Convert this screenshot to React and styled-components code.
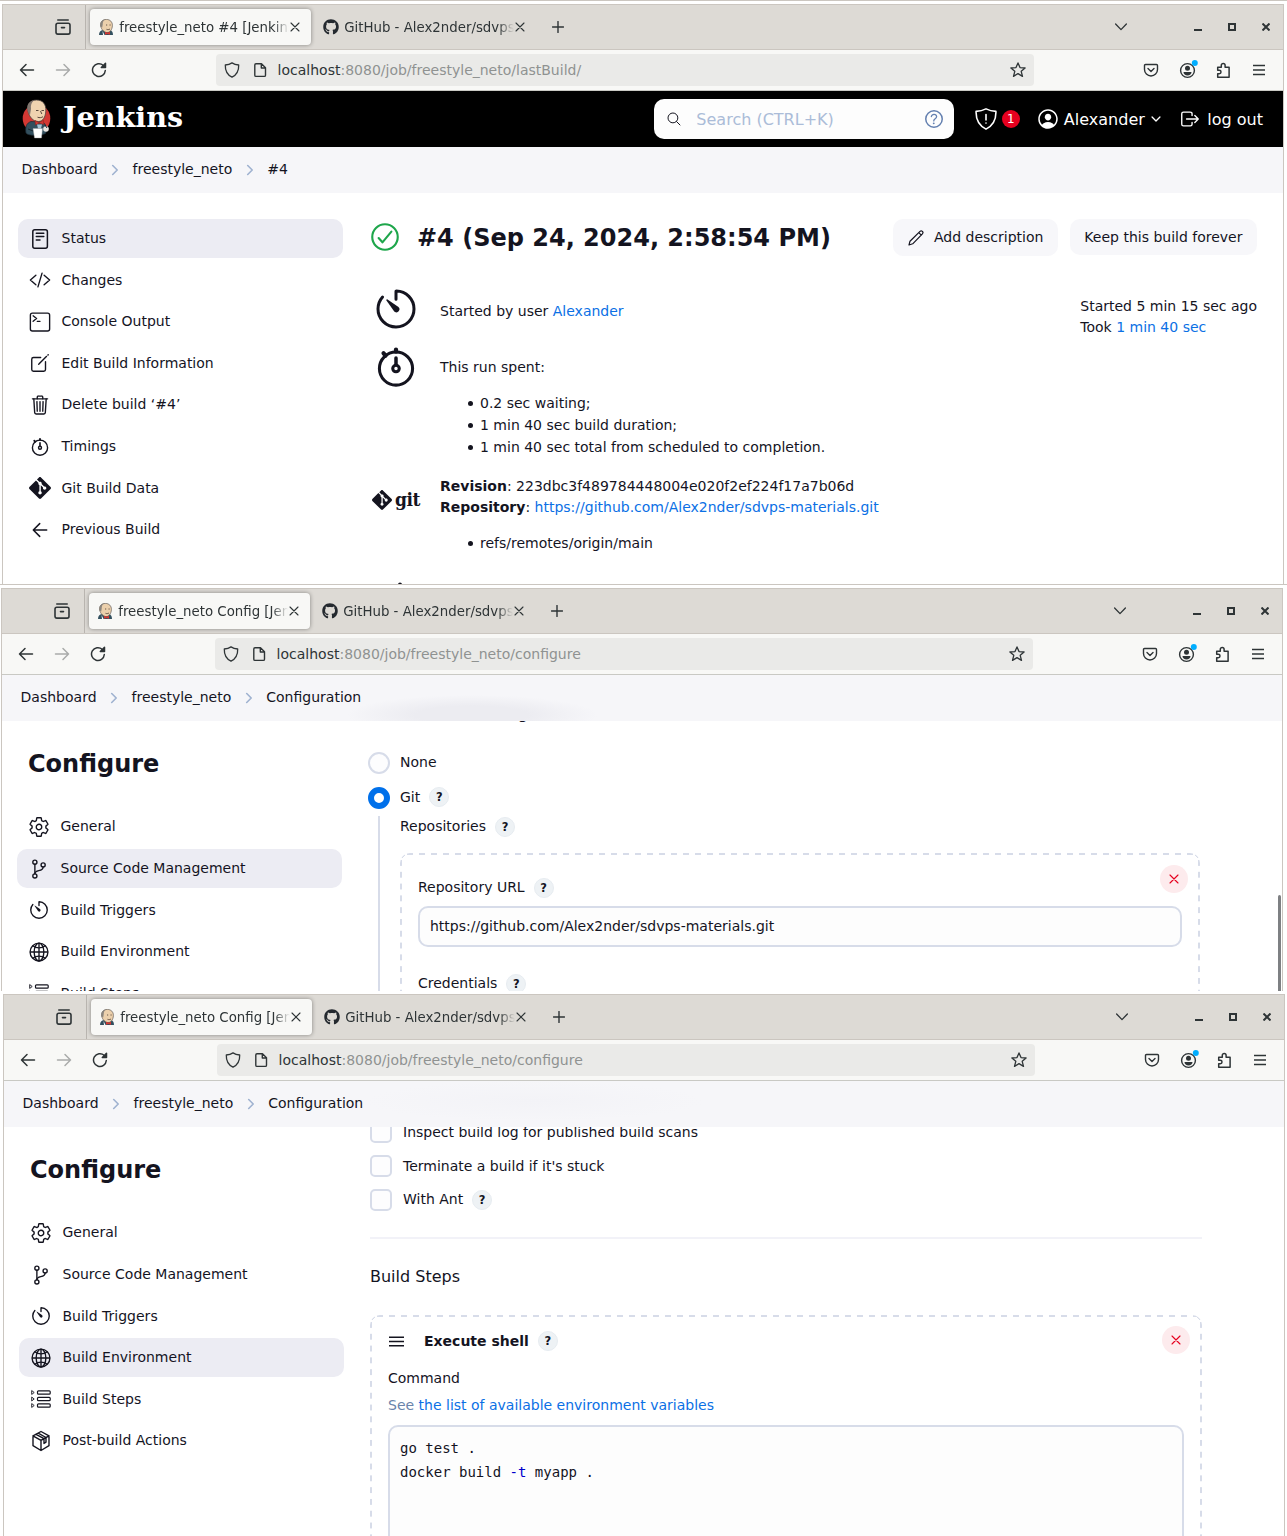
import React from "react";
import styled, { createGlobalStyle, css } from "styled-components";
import {
  IoSettingsOutline, IoGitBranchOutline, IoTimerOutline, IoGlobeOutline,
  IoTerminalOutline, IoCreateOutline, IoTrashOutline, IoCheckmarkCircleOutline,
  IoPersonCircleOutline, IoLogOutOutline, IoCodeSlashOutline,
  IoSearchOutline, IoChevronDown, IoHelpCircleOutline,
} from "react-icons/io5";
import { SiGit } from "react-icons/si";
import { FaGithub } from "react-icons/fa";

const Global = createGlobalStyle`
  * { box-sizing: border-box; }
  body { margin: 0; background: #fff; overflow: hidden; }
  ul, h1, h2, p { margin: 0; padding: 0; }
`;

const sans = css`font-family: "DejaVu Sans", Verdana, sans-serif;`;
const ink = "#14141f";
const edge = "#cbc6c0";
const line = "#d7dce9";

const Page = styled.div`
  ${sans}
  width: 1287px;
  height: 1536px;
  overflow: hidden;
  color: ${ink};
  font-size: 14px;
  line-height: 21px;
  border-top: 1px solid ${edge};
  padding-top: 3px;
`;
const Window = styled.section`
  width: 1282px;
  height: ${(p) => p.$height}px;
  margin-left: ${(p) => p.$left}px;
  border: 1px solid ${edge};
  border-bottom: 0;
  overflow: hidden;
  background: #fff;
`;
const Rule = styled.div`
  height: 4px;
  border-top: 1px solid ${edge};
`;
const Gap = styled.div`height: 3px;`;

/* ---------- browser chrome ---------- */
const TabBar = styled.div`
  display: flex;
  align-items: center;
  height: 45px;
  background: #dddad5;
  border-bottom: 1px solid ${edge};
  color: #2e3436;
`;
const ArchiveCell = styled.div`
  display: flex;
  align-items: center;
  align-self: stretch;
  width: 83px;
  padding-left: 52px;
  border-right: 1px solid #b9b5b0;
`;
const Tab = styled.div`
  display: flex;
  align-items: center;
  width: 221px;
  height: 36px;
  margin-left: 4px;
  padding: 0 11px 0 8px;
  border-radius: 4px;
  ${(p) => p.$active && css`background: #f8f8f6; box-shadow: 0 0 4px rgba(0, 0, 0, 0.4);`}
`;
const TabText = styled.span`
  flex: 1;
  margin-left: 5.2px;
  overflow: hidden;
  white-space: nowrap;
  font-size: 13.33px;
  mask-image: linear-gradient(to left, transparent, #000 16px);
`;
const TabClose = styled.span`
  display: flex;
  margin-left: 1px;
`;
const NewTab = styled.span`
  display: flex;
  margin-left: 15.5px;
`;
const WindowButtons = styled.div`
  display: flex;
  align-items: center;
  gap: 26px;
  margin-left: auto;
  padding-right: 13px;
`;
const AllTabs = styled.span`
  display: flex;
  margin-right: 41px;
`;
const Toolbar = styled.div`
  display: flex;
  align-items: center;
  gap: 20px;
  height: 41px;
  padding-left: 16px;
  background: #f8f8f6;
  border-bottom: 1px solid #c9c9c4;
  color: #2e3436;
`;
const UrlBar = styled.div`
  display: flex;
  align-items: center;
  width: 818px;
  height: 32px;
  margin: 0 89px;
  padding: 0 8px;
  gap: 12px;
  border-radius: 4px;
  background: #eaeae8;
`;
const Url = styled.span`
  flex: 1;
  margin-left: -2.4px;
  color: #8f9291;
  b { font-weight: 400; color: #2e3436; }
`;

const Svg = ({ s = 16, vb = 16, children, ...rest }) => (
  <svg width={s} height={s} viewBox={`0 0 ${vb} ${vb}`} fill="none" stroke="currentColor"
    strokeWidth="1.3" strokeLinecap="round" strokeLinejoin="round" {...rest}>{children}</svg>
);

const ButlerFace = () => (
  <svg width="16" height="16" viewBox="0 0 16 16">
    <path d="M1 16c0-3 1.500-4.500 4-5h7c2 .5 3 2.500 3 5z" fill="#33505f" />
    <path d="M2.600 7C2 3 4.500.4 8.300.4s6.300 2.600 6.100 6.200c-.1 3.600-2.200 7-5.200 7S3.400 10.500 2.600 7z" fill="#ecd0ac" stroke="#4a4340" strokeWidth=".6" />
    <path d="M2.600 7.500C1.700 3.500 4 .8 7.500.6 5.500 1.500 4.600 3 4.700 5.500l-.5 3z" fill="#8b857e" />
    <path d="M8 6h1.200M11.500 6h1.200M8.500 10.300c1.300.5 2.500.3 3.500-.3" stroke="#4a3a30" strokeWidth=".8" fill="none" />
    <path d="M7 12.800l2.400 1 2.600-1v2.900l-2.600-.8-2.400.8z" fill="#d33833" />
    <path d="M4.500 12l2 4h-1.500z" fill="#fff" />
  </svg>
);

const Archive = () => (
  <Svg strokeWidth="1.6"><path d="M2.800 1h10.400M1 6.200C1 5 1.600 4.300 2.800 4.300h10.400c1.200 0 1.800.7 1.800 1.900v7c0 1.200-.6 1.900-1.800 1.900H2.800C1.600 15.100 1 14.400 1 13.200zM6.500 8.600h3" /></Svg>
);
const Cross = ({ s = 10, w = 1.1 }) => (
  <Svg s={s} vb={10} strokeWidth={w}><path d="M1 1l8 8M9 1l-8 8" /></Svg>
);

function Chrome({ title, path }) {
  return (
    <>
      <TabBar>
        <ArchiveCell><Archive /></ArchiveCell>
        <Tab $active>
          <ButlerFace />
          <TabText>{title}</TabText>
          <TabClose><Cross /></TabClose>
        </Tab>
        <Tab>
          <FaGithub size={16} color="#24292f" />
          <TabText>GitHub - Alex2nder/sdvps-materials</TabText>
          <TabClose><Cross /></TabClose>
        </Tab>
        <NewTab><Svg s={12} vb={12} strokeWidth="1.4"><path d="M6 .5v11M.5 6h11" /></Svg></NewTab>
        <WindowButtons>
          <AllTabs><Svg s={12} vb={12}><path d="M.6 3L6 8.600 11.400 3" /></Svg></AllTabs>
          <Svg s={8} vb={8} stroke="none"><path d="M0 6h8v2H0z" fill="currentColor" /></Svg>
          <Svg s={8} vb={8} strokeWidth="2" strokeLinejoin="miter"><path d="M1 1h6v6H1z" /></Svg>
          <Svg s={8} vb={8} strokeWidth="2" strokeLinecap="butt"><path d="M.5.5l7 7M7.500.5l-7 7" /></Svg>
        </WindowButtons>
      </TabBar>
      <Toolbar>
        <Svg strokeWidth="1.5"><path d="M14.500 8H1.500M7 2.500L1.500 8 7 13.500" /></Svg>
        <Svg strokeWidth="1.5" color="#a9abaa"><path d="M1.500 8h13M9 2.500L14.500 8 9 13.500" /></Svg>
        <Svg strokeWidth="1.5"><path d="M14.300 8.500A6.400 6.400 0 1 1 12.200 3.300M14.500 1.300v4.200h-4.200z" /><path d="M14.500 1.300v4.200h-4.200z" fill="currentColor" stroke="none" /></Svg>
        <UrlBar>
          <Svg><path d="M8 .9c2 1.400 4.300 2 6.700 2.100.2 5.400-1.700 9.700-6.700 12.200C3 12.700 1.100 8.400 1.300 3 3.700 2.900 6 2.300 8 .9z" /></Svg>
          <Svg strokeWidth="1.4"><path d="M4 1.700h5.500l4 4v7.500c0 .8-.4 1.200-1.200 1.200H4c-.8 0-1.200-.4-1.200-1.200V2.900c0-.8.400-1.200 1.200-1.200zM9.300 1.900V6h4" /></Svg>
          <Url><b>localhost</b>:8080/job/freestyle_neto/{path}</Url>
          <Svg><path d="M8 .9l2 4.700 5.100.4-3.900 3.300 1.300 5.100L8 11.600l-4.500 2.800 1.300-5.100L.9 6 6 5.600z" /></Svg>
        </UrlBar>
        <Svg strokeWidth="1.4"><path d="M2.500 2.500h11c.6 0 1 .4 1 1v4a6.500 6.500 0 0 1-13 0v-4c0-.6.400-1 1-1zM5 6.500l3 2.900 3-2.900" /></Svg>
        <Svg strokeWidth="1.4" overflow="visible">
          <circle cx="8.500" cy="8.500" r="6.900" />
          <g fill="currentColor" stroke="none"><circle cx="8.500" cy="6.300" r="2.500" /><path d="M4.500 10h8c0 2.300-1.800 3.500-4 3.500s-4-1.200-4-3.500z" /></g>
          <circle cx="15.800" cy="1" r="3" fill="#00aeff" stroke="none" />
        </Svg>
        <Svg strokeWidth="1.5"><path d="M2.700 5.200h3.600V3.300a1.900 1.900 0 0 1 3.800 0v1.900h4v10H2.700v-3.500h1.600a1.700 1.700 0 0 0 0-3.400H2.700z" /></Svg>
        <Svg strokeLinecap="butt"><path d="M2 3.500h12M2 8h12M2 12.500h12" /></Svg>
      </Toolbar>
    </>
  );
}

/* ---------- jenkins shell ---------- */
const Header = styled.header`
  display: flex;
  align-items: center;
  height: 56px;
  padding: 0 20px 0 18px;
  background: #000;
  color: #fff;
  font-size: 16px;
`;
const Brand = styled.span`
  margin: -5px 0 0 11px;
  font: bold 28.6px/34px "DejaVu Serif", serif;
`;
const Search = styled.div`
  display: flex;
  align-items: center;
  width: 300px;
  height: 40px;
  margin-left: auto;
  padding: 0 8px 0 12px;
  border-radius: 10px;
  background: #fdfdfd;
  color: #14141f;
  span { flex: 1; margin-left: 14px; color: #abbcd8; }
`;
const HeaderItem = styled.div`
  display: flex;
  align-items: center;
  margin-left: ${(p) => p.$gap}px;
  gap: ${(p) => p.$inner}px;
`;
const Badge = styled.span`
  width: 18px;
  height: 18px;
  border-radius: 50%;
  background: #e6001f;
  font-size: 12px;
  line-height: 18px;
  text-align: center;
`;
const smudges = {
  none: "#f6f6f9",
  dark: "radial-gradient(125px 20px at 470px 40px, #ececf1 45%, rgba(236, 236, 241, 0)), #f6f6f9",
  light: "radial-gradient(170px 20px at 530px 20px, #f3f3f7, rgba(243, 243, 247, 0)), #f6f6f9",
};
const Crumbs = styled.nav`
  position: relative;
  z-index: 1;
  display: flex;
  align-items: center;
  height: 46px;
  padding: 0 0 2px 18.6px;
  background: ${(p) => smudges[p.$smudge]};
`;
const CrumbSep = styled.span`
  display: flex;
  width: 35px;
  justify-content: center;
  padding-top: 2px;
  color: #9fb2d0;
`;
const Breadcrumbs = ({ items, smudge = "none" }) => (
  <Crumbs $smudge={smudge}>
    {items.map((t, i) => (
      <React.Fragment key={t}>
        {i > 0 && <CrumbSep><Svg s={12} vb={12} strokeWidth="1.6"><path d="M3.700 1.500L8.200 6l-4.500 4.500" /></Svg></CrumbSep>}
        <span>{t}</span>
      </React.Fragment>
    ))}
  </Crumbs>
);
const Body = styled.div`
  display: flex;
  align-items: flex-start;
  padding-left: 15px;
`;
const Side = styled.aside`
  width: 325px;
  padding-top: ${(p) => p.$top}px;
  flex: none;
`;
const SideTitle = styled.h1`
  height: 60.4px;
  padding: 1px 0 0 11px;
  font-size: 24px;
  line-height: 32px;
`;
const SideItem = styled.div`
  display: flex;
  align-items: center;
  height: 39px;
  margin-bottom: 2.61px;
  padding-left: 11px;
  border-radius: 10px;
  background: ${(p) => (p.$active ? "#ececf3" : "transparent")};
  svg { flex: none; }
  span { margin-left: 10.5px; }
`;
const SideList = ({ items, active }) => items.map(([icon, label]) => (
  <SideItem key={label} $active={label === active}>{icon}<span>{label}</span></SideItem>
));

const DocIcon = () => (
  <Svg s={22} vb={22} strokeWidth="1.500"><rect x="3.800" y="1.700" width="14.600" height="18.600" rx="2" /><path d="M7.300 5.300h7.500M7.300 8.500h7.500M7.300 12h3.700" /></Svg>
);
const BackIcon = () => (
  <Svg s={22} vb={22} strokeWidth="1.500"><path d="M17.700 11H4.500M10.700 4.600L4.300 11l6.400 6.400" /></Svg>
);
const StopwatchIcon = ({ s = 22, w = 1.4 }) => (
  <Svg s={s} vb={22} strokeWidth={w}>
    <circle cx="11" cy="11.700" r="7.600" /><path d="M11 6.900v3" strokeWidth={w * 1.15} />
    <path d="M11 3v1M5.300 4.700l.9 1.100" strokeWidth={w * 1.4} />
    <circle cx="11" cy="11.700" r="1.500" />
  </Svg>
);
const StepsIcon = () => (
  <Svg s={22} vb={22} strokeWidth="1.200">
    {[2.800, 9.300, 15.800].map((y) => (
      <g key={y}><rect x="7.500" y={y} width="12.700" height="3.400" rx="1" /><path d={`M2 ${y}l2.200 1.700L2 ${y + 3.400}z`} strokeWidth=".9" /></g>
    ))}
  </Svg>
);
const PackageIcon = () => (
  <Svg s={22} vb={22} strokeWidth="1.400">
    <path d="M11 1.500l8 4.300v9.900l-8 4.800-8-4.800V5.800zM3 5.800l8 4.500 8-4.500M11 10.300v10M8.200 3.200l7.800 4.300v4.700l-2 1.200V8.700L6 4.300" />
  </Svg>
);
const PenIcon = () => (
  <Svg strokeWidth="1.200"><path d="M1 15l1-3.800L12 1.400c.8-.7 1.700-.6 2.400 0 .7.700.8 1.600 0 2.500L4.700 13.800zM10.800 2.700l2.500 2.500" /></Svg>
);

/* ---------- build page ---------- */
const Main = styled.main`
  width: ${(p) => p.$width}px;
  margin-left: ${(p) => p.$left}px;
  padding-top: ${(p) => p.$top}px;
`;
const TitleRow = styled.div`
  display: flex;
  align-items: flex-start;
  height: 65px;
`;
const Title = styled.h1`
  flex: 1;
  margin-left: 15px;
  font-size: 24px;
  line-height: 38px;
`;
const StatusMark = styled.span`
  display: flex;
  margin: 1px 0 0 -3px;
  color: #1ea64b;
`;
const Button = styled.span`
  display: flex;
  align-items: center;
  gap: 10px;
  height: ${(p) => p.$height}px;
  padding: 0 14.500px;
  margin-left: 12px;
  border-radius: 10px;
  background: #f7f7fa;
`;
const Columns = styled.div`
  display: flex;
  justify-content: space-between;
`;
const Entry = styled.div`
  display: grid;
  grid-template-columns: 50px auto;
  column-gap: 19px;
  height: ${(p) => p.$height}px;
`;
const EntryIcon = styled.div`
  display: flex;
  align-items: center;
  justify-content: center;
  height: 50px;
`;
const EntryText = styled.div`
  padding-top: ${(p) => p.$top}px;
`;
const Bullets = styled.ul`
  margin-top: 14px;
  padding-left: 28px;
  line-height: 22px;
  list-style: none;
  li { display: flex; align-items: center; }
  li::before {
    content: "";
    width: 5px;
    height: 5px;
    margin: 1px 7px 0 0;
    border-radius: 50%;
    background: ${ink};
  }
`;
const Link = styled.a`color: #0b70e5;`;
const Timing = styled.div`padding-top: 12px;`;
const GitLogo = styled.span`
  display: flex;
  align-items: center;
  gap: 3px;
  font: bold 19px/20px "DejaVu Serif Condensed", "DejaVu Serif", serif;
  letter-spacing: -0.4px;
  span { margin-top: -3px; }
`;

/* ---------- config page ---------- */
const HelpDot = styled.span`
  display: inline-flex;
  align-items: center;
  justify-content: center;
  width: 20px;
  height: 20px;
  margin-left: 9px;
  border-radius: 50%;
  background: #eef2f5;
  border: 1px solid #e7ecf1;
  font-size: 11.5px;
  font-weight: bold;
  line-height: 18px;
`;
const Help = () => <HelpDot>?</HelpDot>;
const Radio = styled.span`
  width: 22px;
  height: 22px;
  border-radius: 50%;
  border: ${(p) => (p.$on ? "6.5px solid #0070ea" : `2px solid ${line}`)};
  background: ${(p) => (p.$on ? "#fff" : "#fdfdfe")};
`;
const Check = styled.span`
  width: 22px;
  height: 22px;
  margin-right: 1px;
  border: 2px solid ${line};
  border-radius: 5px;
  background: #fdfdfe;
`;
const Option = styled.div`
  display: flex;
  align-items: center;
  gap: 10px;
  height: ${(p) => p.$height}px;
`;
const Label = styled.div`
  display: flex;
  align-items: center;
  height: 21px;
  margin-top: ${(p) => p.$top ?? 0}px;
  color: ${(p) => p.$color ?? ink};
  white-space: pre;
`;
const Choices = styled.div`
  display: flex;
  flex-direction: column;
  gap: 7px;
`;
const SectionTitle = styled.h2`
  font-weight: 400;
  font-size: 16px;
  line-height: 20px;
  margin-bottom: ${(p) => p.$bottom}px;
`;
const Nested = styled.div`
  margin: 4px 0 0 10px;
  padding-left: 20px;
  border-left: 2px solid ${line};
  height: 300px;
`;
const Dashed = styled.div`
  width: ${(p) => p.$width}px;
  height: 320px;
  padding: ${(p) => p.$pad};
  margin-top: ${(p) => p.$top}px;
  border: 2px solid transparent;
  border-radius: 10px;
  background-image:
    linear-gradient(-45deg, transparent 33%, ${line} 33% 67%, transparent 67%),
    linear-gradient(45deg, transparent 33%, ${line} 33% 67%, transparent 67%),
    linear-gradient(to right, ${line} 50%, transparent 50%),
    linear-gradient(to bottom, ${line} 50%, transparent 50%),
    linear-gradient(to bottom, ${line} 50%, transparent 50%);
  background-size: 4px 4px, 4px 4px, 12px 2px, 2px 11.8px, 2px 11.8px;
  background-position: 1px 1px, right 1px top 1px, 7px 0, 0 7px, right 0 top 7px;
  background-repeat: no-repeat, no-repeat, repeat-x, repeat-y, repeat-y;
  background-origin: border-box;
  background-clip: border-box;
`;
const HeadRow = styled.div`
  display: flex;
  justify-content: space-between;
  align-items: ${(p) => p.$align};
`;
const Remove = styled.span`
  display: flex;
  align-items: center;
  justify-content: center;
  width: 28px;
  height: 28px;
  margin-right: -6px;
  border-radius: 50%;
  background: #fdebed;
  color: #e6001f;
`;
const Field = styled.div`
  height: ${(p) => p.$height}px;
  margin-top: ${(p) => p.$top}px;
  padding: ${(p) => p.$pad};
  border: 2px solid ${line};
  border-radius: 10px;
  background: #fdfdfd;
`;
const Code = styled.pre`
  margin: 0;
  font: 14px/24px "DejaVu Sans Mono", monospace;
  i { font-style: normal; color: #0000cc; }
`;
const Divider = styled.div`
  height: 2px;
  margin: 21px 0 28px;
  background: #f2f2f8;
`;
const ScrollThumb = styled.div`
  width: 3px;
  height: 110px;
  margin: 174px 1px 0 auto;
  border-radius: 2px;
  background: #7e8083;
`;
const HandleName = styled.b`margin-left: 19px;`;

const buildLinks = [
  [<DocIcon />, "Status"],
  [<IoCodeSlashOutline size={22} />, "Changes"],
  [<IoTerminalOutline size={22} />, "Console Output"],
  [<IoCreateOutline size={22} />, "Edit Build Information"],
  [<IoTrashOutline size={22} />, "Delete build ‘#4’"],
  [<StopwatchIcon />, "Timings"],
  [<SiGit size={22} />, "Git Build Data"],
  [<BackIcon />, "Previous Build"],
];
const configLinks = [
  [<IoSettingsOutline size={22} />, "General"],
  [<IoGitBranchOutline size={22} />, "Source Code Management"],
  [<IoTimerOutline size={22} />, "Build Triggers"],
  [<IoGlobeOutline size={22} />, "Build Environment"],
  [<StepsIcon />, "Build Steps"],
  [<PackageIcon />, "Post-build Actions"],
];

const Butler = () => (
  <svg width="31" height="40" viewBox="0 0 31 40">
    <ellipse cx="15.500" cy="19.500" rx="13.800" ry="14" fill="#d33833" />
    <path d="M5 34c-1-6 .5-10 5-11.500l11 .5c4.500 1.500 4.500 6 4 11-2 2.500-18 3.500-20 0z" fill="#33505f" stroke="#1b2a33" strokeWidth=".7" />
    <path d="M7 12C5.500 5 9.500 1 15.500 1c6.500 0 9.800 4.500 9.300 11-.3 6-3 10.500-7.300 10.500C12 22.500 8.300 18 7 12z" fill="#efd3b0" stroke="#4a4340" strokeWidth=".8" />
    <path d="M7 13C5 6 8 2 13 1.300 10.500 3.500 9.500 6 10 10l-1 6z" fill="#80766f" />
    <path d="M15 11.500h2.500M20.500 11.500h2.500M16.500 18.200c2 .8 4 .5 5.500-.5M19.500 12l1.300 3" stroke="#4a3a30" strokeWidth=".9" fill="none" />
    <path d="M14 21.500l4 2 4.500-2.200.4 4.200-4.600-1.300-3.800 1.800z" fill="#d33833" stroke="#81201d" strokeWidth=".5" />
    <path d="M16 25.500h5l-1 4h-3z" fill="#a8c4d4" />
    <path d="M12 29.500h9.500l-1 9.500h-7z" fill="#fff" stroke="#999" strokeWidth=".4" />
    <circle cx="25" cy="30" r="2.800" fill="#e8e4e0" />
    <path d="M7 30l5 2M24 26l2 3" stroke="#1b2a33" />
  </svg>
);

function BuildPage() {
  return (
    <Window $left={2} $height={580}>
      <Chrome title="freestyle_neto #4 [Jenkins]" path="lastBuild/" />
      <Header>
        <Butler />
        <Brand>Jenkins</Brand>
        <Search>
          <IoSearchOutline size={16} />
          <span>Search (CTRL+K)</span>
          <IoHelpCircleOutline size={24} color="#6480b0" />
        </Search>
        <HeaderItem $gap={20.5} $inner={5}>
          <Svg s={22} vb={22} strokeWidth="1.600"><path d="M11 .9c3 1.500 6.300 2.300 9.900 2.500.3 8-2.500 13.800-9.900 17.700C3.600 17.200.8 11.400 1.100 3.400 4.700 3.200 8 2.400 11 .9zM11 6.500v5.500M11 15v.1" /></Svg>
          <Badge>1</Badge>
        </HeaderItem>
        <HeaderItem $gap={16} $inner={4}>
          <IoPersonCircleOutline size={24} />
          <span>Alexander</span>
          <IoChevronDown size={14} />
        </HeaderItem>
        <HeaderItem $gap={16.5} $inner={6}>
          <IoLogOutOutline size={22} />
          <span>log out</span>
        </HeaderItem>
      </Header>
      <Breadcrumbs items={["Dashboard", "freestyle_neto", "#4"]} />
      <Body>
        <Side $top={26}><SideList items={buildLinks} active="Status" /></Side>
        <Main $left={28} $top={26} $width={886}>
          <TitleRow>
            <StatusMark><IoCheckmarkCircleOutline size={34} /></StatusMark>
            <Title>#4 (Sep 24, 2024, 2:58:54 PM)</Title>
            <Button $height={37}><PenIcon />Add description</Button>
            <Button $height={36}>Keep this build forever</Button>
          </TitleRow>
          <Columns>
            <div>
              <Entry $height={58}>
                <EntryIcon><IoTimerOutline size={48} /></EntryIcon>
                <EntryText $top={17}>Started by user <Link>Alexander</Link></EntryText>
              </Entry>
              <Entry $height={133}>
                <EntryIcon><StopwatchIcon s={48} /></EntryIcon>
                <EntryText $top={15}>
                  This run spent:
                  <Bullets>
                    <li>0.2 sec waiting;</li>
                    <li>1 min 40 sec build duration;</li>
                    <li>1 min 40 sec total from scheduled to completion.</li>
                  </Bullets>
                </EntryText>
              </Entry>
              <Entry $height={104}>
                <EntryIcon><GitLogo><SiGit size={20} /><span>git</span></GitLogo></EntryIcon>
                <EntryText $top={1}>
                  <b>Revision</b>: 223dbc3f489784448004e020f2ef224f17a7b06d<br />
                  <b>Repository</b>: <Link>https://github.com/Alex2nder/sdvps-materials.git</Link>
                  <Bullets><li>refs/remotes/origin/main</li></Bullets>
                </EntryText>
              </Entry>
              <Entry $height={50}>
                <EntryIcon><Svg s={44} vb={44} stroke="none"><circle cx="26" cy="2.500" r="2" fill="currentColor" /></Svg></EntryIcon>
              </Entry>
            </div>
            <Timing>Started 5 min 15 sec ago<br />Took <Link>1 min 40 sec</Link></Timing>
          </Columns>
        </Main>
      </Body>
    </Window>
  );
}

const crumbs = ["Dashboard", "freestyle_neto", "Configuration"];

const PullUp = styled.div`
  margin-top: -${(p) => p.$by}px;
`;

function ScmPage() {
  return (
    <Window $left={1} $height={403}>
      <Chrome title="freestyle_neto Config [Jenkins]" path="configure" />
      <Breadcrumbs items={crumbs} smudge="dark" />
      <Body>
        <Side $top={26}>
          <SideTitle>Configure</SideTitle>
          <SideList items={configLinks.slice(0, 5)} active="Source Code Management" />
        </Side>
        <Main $left={26} $top={0} $width={832}>
          <PullUp $by={17}>
            <SectionTitle $bottom={25}>Source Code Management</SectionTitle>
            <Choices>
              <Option $height={28}><Radio /><Label $top={-2}>None</Label></Option>
              <Option $height={28}><Radio $on /><Label $top={-2}>Git<Help /></Label></Option>
            </Choices>
            <Nested>
              <Label>Repositories<Help /></Label>
              <Dashed $width={800} $top={16} $pad="10px 16px">
                <HeadRow $align="flex-start">
                  <Label $top={12}>Repository URL<Help /></Label>
                  <Remove><Cross /></Remove>
                </HeadRow>
                <Field $height={41} $top={8} $pad="8px 10px">https://github.com/Alex2nder/sdvps-materials.git</Field>
                <Label $top={26}>Credentials<Help /></Label>
              </Dashed>
            </Nested>
          </PullUp>
        </Main>
        <ScrollThumb />
      </Body>
    </Window>
  );
}

function StepsPage() {
  return (
    <Window $left={3} $height={542}>
      <Chrome title="freestyle_neto Config [Jenkins]" path="configure" />
      <Breadcrumbs items={crumbs} smudge="light" />
      <Body>
        <Side $top={26}>
          <SideTitle>Configure</SideTitle>
          <SideList items={configLinks} active="Build Environment" />
        </Side>
        <Main $left={26} $top={0} $width={832}>
          <PullUp $by={12}>
            <Option $height={34}><Check /><span>Inspect build log for published build scans</span></Option>
            <Option $height={34}><Check /><span>Terminate a build if it's stuck</span></Option>
            <Option $height={33}><Check /><Label>With Ant<Help /></Label></Option>
            <Divider />
            <SectionTitle $bottom={28}>Build Steps</SectionTitle>
            <Dashed $width={832} $top={0} $pad="9px 16px">
              <HeadRow $align="center">
                <Label $top={2}>
                  <Svg s={17} vb={17} strokeLinecap="butt" strokeWidth="1.500"><path d="M1 4.300h15M1 8.500h15M1 12.700h15" /></Svg>
                  <HandleName>Execute shell</HandleName><Help />
                </Label>
                <Remove><Cross /></Remove>
              </HeadRow>
              <Label $top={14}>Command</Label>
              <Label $top={6} $color="#6a84ab">See <Link>the list of available environment variables</Link></Label>
              <Field $height={200} $top={9} $pad="9px 10px">
                <Code>go test .{"\n"}docker build <i>-t</i> myapp .</Code>
              </Field>
            </Dashed>
          </PullUp>
        </Main>
      </Body>
    </Window>
  );
}

export default function App() {
  return (
    <Page>
      <Global />
      <BuildPage />
      <Rule />
      <ScmPage />
      <Gap />
      <StepsPage />
    </Page>
  );
}
